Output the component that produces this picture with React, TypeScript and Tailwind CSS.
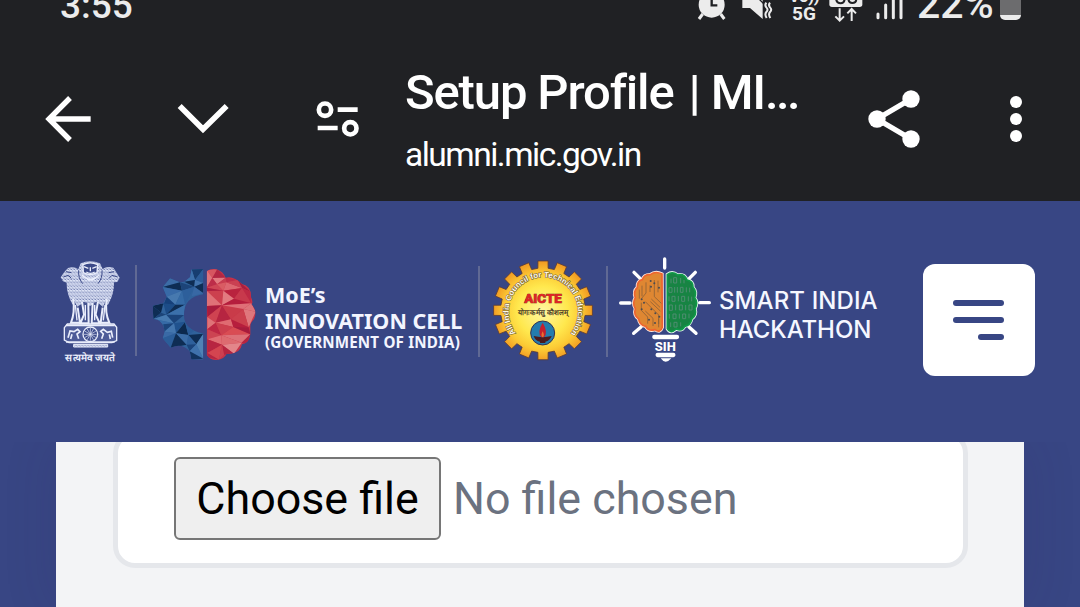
import type { ReactNode } from "react";

const f = (n: number) => n.toFixed(1);

function gearPath(cx: number, cy: number, outer: number, inner: number, teeth: number) {
  const step = (Math.PI * 2) / teeth;
  const pts: string[] = [];
  for (let i = 0; i < teeth; i++) {
    const a = i * step - Math.PI / 2;
    const corners: [number, number][] = [
      [inner, -0.31],
      [outer, -0.26],
      [outer, 0.26],
      [inner, 0.31],
    ];
    for (const [r, k] of corners) {
      pts.push(`${f(cx + r * Math.cos(a + k * step))} ${f(cy + r * Math.sin(a + k * step))}`);
    }
  }
  return `M${pts.join("L")}Z`;
}

function StatusBar() {
  return (
    <div className="flex h-[24px] w-full items-start overflow-hidden text-[#ececec]">
      <span className="-mt-[16px] ml-[60px] w-[76px] text-[37px] leading-[44px] font-medium whitespace-nowrap">3:55</span>
      <svg className="ml-[561px] h-[24px] w-[80px] shrink-0" viewBox="51 0 240 72">
        <circle cx="95" cy="14" r="39" fill="#ececec" />
        <path d="M68 42l-11 15M122 42l11 15" stroke="#ececec" strokeWidth="9" />
        <path d="M95 -4V16H112" fill="none" stroke="#202124" strokeWidth="7" />
        <path d="M187 -2V24H210L248 57V-2Z" fill="#ececec" />
        <path d="M236 -4L252 12" stroke="#202124" strokeWidth="4" />
        <path d="M259 8q-6 7 0 14q7 7 0 14q-6 7 1 18M270 8q-6 7 0 14q7 7 0 14q-6 7 1 18" fill="none" stroke="#ececec" strokeWidth="6" />
      </svg>
      <div className="ml-[13px] flex w-[28px] flex-col items-center font-bold">
        <span className="-mt-[12px] text-[17px] leading-[17px] tracking-tight whitespace-nowrap">Vo))</span>
        <span className="text-[19px] leading-[17px]">5G</span>
      </div>
      <svg className="ml-[11px] h-[24px] w-[34px] shrink-0" viewBox="449 0 102 72">
        <rect x="450" y="-40" width="99" height="61" rx="8" fill="#ececec" />
        <path d="M470 -4q2 14 14 14q10 0 12-12M507 -6q0 15 12 15q12 0 12-12h-9" fill="none" stroke="#202124" strokeWidth="6" />
        <path d="M481 25V61M468 49L481 62L494 49M517 63V28M504 40L517 27L530 40" fill="none" stroke="#ececec" strokeWidth="6" />
      </svg>
      <svg className="ml-[11px] h-[24px] w-[32px] shrink-0" viewBox="582 0 96 72">
        <path d="M594 42V53M617 15V53M640 -4V53M663 -9V53" stroke="#ececec" strokeWidth="9" strokeLinecap="round" />
      </svg>
      <span className="-mt-[18px] ml-[11px] w-[83px] text-[41px] leading-[44px] font-medium whitespace-nowrap">22%</span>
      <div className="flex h-[20px] w-[21px] flex-col overflow-hidden rounded-b-[5px] bg-[#ececec]">
        <div className="h-[15px] bg-[#6c6c6e]" />
      </div>
    </div>
  );
}

function BrowserBar() {
  return (
    <div className="flex h-[177px] items-start text-white">
      <svg className="mt-[70px] ml-[44px] h-[50px] w-[48px] shrink-0" viewBox="132 282 144 150">
        <path d="M272 357H150M210 294L147 357L210 420" fill="none" stroke="white" strokeWidth="16" />
      </svg>
      <svg className="mt-[75px] ml-[84px] h-[40px] w-[54px] shrink-0" viewBox="528 297 162 120">
        <path d="M539 318L609 388L680 318" fill="none" stroke="white" strokeWidth="17" />
      </svg>
      <svg className="mt-[75px] ml-[85px] h-[40px] w-[46px] shrink-0" viewBox="946 297 138 120">
        <g fill="none" stroke="white" strokeWidth="14">
          <circle cx="976" cy="329" r="18.5" />
          <circle cx="1052" cy="385" r="18.5" />
          <path d="M1014 329H1074M954 384H1014" />
        </g>
      </svg>
      <div className="mt-[39px] ml-[44px] flex w-[401px] flex-col whitespace-nowrap">
        <span className="text-[49px] leading-[60px] font-medium tracking-[-1.15px]">
          Setup Profile <span className="ml-[4px]">| MI</span>
          <span className="tracking-[-2.6px]">...</span>
        </span>
        <span className="mt-[11px] text-[33.5px] leading-[42px] font-[450] tracking-[-1.5px]">alumni.mic.gov.in</span>
      </div>
      <svg className="mt-[64px] ml-[61px] h-[62px] w-[56px] shrink-0" viewBox="561 264 168 186">
        <path d="M693 297L591 357L693 417" fill="none" stroke="white" strokeWidth="16" />
        <g fill="white">
          <circle cx="693" cy="297" r="26" />
          <circle cx="591" cy="357" r="26" />
          <circle cx="693" cy="417" r="26" />
        </g>
      </svg>
      <div className="mt-[72px] ml-[87px] flex flex-col gap-[5px]">
        <div className="size-[12px] rounded-full bg-white" />
        <div className="size-[12px] rounded-full bg-white" />
        <div className="size-[12px] rounded-full bg-white" />
      </div>
    </div>
  );
}

function LionCapital() {
  const c = "#e9edfb";
  return (
    <svg className="mt-[59px] ml-[59px] h-[106px] w-[62px] shrink-0" viewBox="57 45 186 318">
      <defs>
        <pattern id="fur" width="9" height="10" patternUnits="userSpaceOnUse">
          <rect width="9" height="10" fill="#dde3f6" />
          <path d="M1 1l3 4 3-4M-2 6l2 3M6 9l3-3" stroke="#4a5894" strokeWidth="1.8" fill="none" />
        </pattern>
      </defs>
      <path d="M122 55Q150 42 180 55L188 72Q200 62 220 68L230 83L239 98L232 111L222 112Q223 145 205 178L189 186L171 171L150 183L132 171L112 186L97 178Q79 145 80 113L69 109L62 97L73 81L84 69Q102 63 115 73Z" fill="url(#fur)" />
      <path d="M129 59Q151 48 173 59L171 83Q151 94 130 83Z" fill="#3b4988" stroke={c} strokeWidth="4" />
      <path d="M132 65L145 70M170 65L157 70M151 67V79M139 81Q151 89 164 81M126 90Q151 116 178 89M137 99Q151 112 167 99" fill="none" stroke={c} strokeWidth="4" />
      <path d="M116 76Q114 100 128 116M186 76Q188 100 174 116" fill="none" stroke="#3b4988" strokeWidth="3" />
      <path d="M70 96L85 91L94 100M233 96L216 91L207 100M78 80L94 83M222 80L206 83" fill="none" stroke="#3b4988" strokeWidth="3" />
      <path d="M100 161Q105 204 93 233H120L113 188M200 161Q194 204 208 233H182L188 188M126 170L132 209L121 235H146L145 174M174 170L167 209L179 235H155L158 174" fill="#45538f" stroke={c} strokeWidth="6" />
      <path d="M106 180L111 226M195 180L190 226M136 180V226M164 180V226" stroke={c} strokeWidth="4" />
      <path d="M82 237H222L230 247V287L216 293H87L73 285V248Z" fill="#4d5b98" stroke={c} strokeWidth="4" />
      <path d="M78 241H224M78 291H224" stroke={c} strokeWidth="5" />
      <circle cx="151" cy="268" r="22" fill="#3d4c8b" stroke={c} strokeWidth="4" />
      {Array.from({ length: 12 }, (_, i) => {
        const a = (i * Math.PI) / 6;
        return <line key={i} x1="151" y1="268" x2={151 + 19 * Math.cos(a)} y2={268 + 19 * Math.sin(a)} stroke={c} strokeWidth="2" />;
      })}
      <path d="M84 278L90 258L102 260L113 253L120 260L111 267L116 281M96 268L92 282M218 278L214 259L202 262L190 253L182 259L190 267L185 281M208 268L211 282" fill="none" stroke={c} strokeWidth="5" />
      <path d="M101 298H203V306H101Z" fill="url(#fur)" stroke={c} strokeWidth="3" />
      <text x="151" y="349" textAnchor="middle" textLength="150" lengthAdjust="spacingAndGlyphs" fontSize="29" fontWeight="700" fill={c}>सत्यमेव जयते</text>
    </svg>
  );
}

const gearFacets: [string, string][] = [
  ["155,43 190,42 165,75", "#173e70"], ["190,42 190,84 165,75", "#2c5c98"], ["155,43 165,75 133,80", "#3d70aa"],
  ["133,80 165,75 163,95", "#0e2d54"], ["165,75 190,84 163,95", "#4274ae"], ["163,95 190,84 190,115", "#0e2d54"], ["163,95 190,115 155,124", "#3868a4"],
  ["90,70 120,82 68,96", "#3c6ca6"], ["120,82 126,107 68,96", "#0e2d54"], ["120,82 163,95 126,107", "#1c4479"], ["68,96 126,107 80,125", "#386aa7"],
  ["80,125 126,107 106,149", "#4779af"], ["126,107 163,95 135,149", "#2d5f9b"], ["126,107 135,149 106,149", "#356aa5"], ["80,125 106,149 70,150", "#16407a"],
  ["70,145 106,149 79,179", "#1c4c87"], ["38,152 70,145 63,173", "#0b284c"], ["38,152 63,173 40,192", "#0e2d54"], ["63,173 79,179 40,192", "#1c4478"],
  ["106,149 135,149 79,179", "#0e2d54"], ["135,149 132,180 79,179", "#3b70ab"], ["40,192 79,179 102,205", "#477ab0"], ["79,179 132,180 102,205", "#1b447b"],
  ["40,192 102,205 70,208", "#366aa6"], ["102,205 135,200 108,235", "#20528e"], ["70,208 102,205 73,230", "#1b447b"], ["73,230 102,205 108,235", "#4476ae"],
  ["73,230 108,235 68,250", "#3a6aa6"], ["68,250 108,235 92,278", "#2b5d99"], ["108,235 92,278 140,269", "#0e2d54"], ["108,235 135,202 145,240", "#0c294e"],
  ["108,235 145,240 140,269", "#3b6ca6"], ["135,200 162,229 145,240", "#2b5c98"], ["145,240 190,236 169,268", "#0e2d54"], ["140,269 145,240 169,268", "#2e609c"],
  ["140,269 169,268 149,289", "#1b447b"], ["149,289 169,268 190,311", "#3f72ac"], ["149,289 190,311 154,314", "#12345f"], ["169,268 190,236 190,311", "#5082b5"],
];

const brainFacets: [string, string][] = [
  ["200,45 232,43 217,69", "#d65660"], ["200,45 217,69 200,98", "#df737b"], ["232,43 257,68 217,69", "#b22743"], ["217,69 257,68 231,88", "#e27a80"],
  ["200,98 217,69 231,88", "#bd2d49"], ["200,98 231,88 250,107", "#cf4656"], ["200,98 250,107 201,108", "#ac1f3f"], ["257,68 293,75 259,82", "#bd2d49"],
  ["231,88 257,68 259,82", "#c73d50"], ["231,88 259,82 250,107", "#d95c63"], ["259,82 306,99 250,107", "#dd6770"], ["293,75 331,110 306,99", "#a91e3e"],
  ["259,82 293,75 306,99", "#ca4052"], ["201,108 250,107 246,151", "#cc404e"], ["201,108 246,151 201,153", "#df7177"], ["250,107 306,99 282,131", "#b9233e"],
  ["250,107 282,131 246,151", "#e27b80"], ["282,131 306,99 334,145", "#c8394c"], ["306,99 331,110 334,145", "#bd2944"], ["246,151 282,131 334,145", "#b51e3d"],
  ["201,153 246,151 202,186", "#a91c3d"], ["202,186 246,151 227,203", "#cf4351"], ["246,151 273,193 227,203", "#b62541"], ["246,151 310,162 273,193", "#c93b49"],
  ["246,151 334,145 310,162", "#df6f77"], ["334,145 347,170 310,162", "#dd747a"], ["310,162 347,170 326,217", "#df777c"], ["310,162 326,217 273,193", "#cb404d"],
  ["202,186 227,203 202,223", "#df7378"], ["202,223 227,203 244,241", "#bd2844"], ["227,203 273,193 280,216", "#df6b71"], ["227,203 280,216 244,241", "#cc404e"],
  ["273,193 326,217 280,216", "#b71e3d"], ["202,223 244,241 202,253", "#cc4452"], ["202,253 244,241 246,269", "#df6d73"], ["244,241 280,216 331,238", "#d94c53"],
  ["280,216 326,217 331,238", "#a71b3c"], ["244,241 331,238 305,263", "#dd7178"], ["244,241 305,263 246,269", "#dd6b70"], ["331,238 323,270 305,263", "#b52440"],
  ["202,253 246,269 202,294", "#b72541"], ["202,294 246,269 237,314", "#d44550"], ["246,269 305,263 282,296", "#e3868a"], ["246,269 282,296 252,299", "#b52440"],
  ["246,269 252,299 237,314", "#cc4051"], ["202,294 237,314 202,307", "#b62541"],
];

function GearBrain() {
  return (
    <svg className="mt-[67px] ml-[14px] h-[94px] w-[106px] shrink-0" viewBox="33 39 318 282">
      <defs>
        <clipPath id="gearHalf">
          <path d="M190 42L155 43L150 67L133 80L120 82L90 70L68 96L80 125L70 145L38 152L40 192Q68 192 74 230L68 250L92 278Q127 262 149 289L154 314H190V235Q132 226 132 180Q132 126 190 118Z" />
        </clipPath>
        <clipPath id="brainHalf">
          <path d="M200 49Q215 39 233 44Q249 49 257 68Q281 62 306 87Q334 93 333 126Q341 145 334 147Q354 170 342 193Q330 205 331 215V238Q328 265 306 268Q301 299 260 296Q253 312 231 315Q210 316 200 299Z" />
        </clipPath>
      </defs>
      <g clipPath="url(#gearHalf)">
        <rect x="33" y="39" width="160" height="280" fill="#30629b" />
        {gearFacets.map(([p, c]) => <polygon key={p} points={p} fill={c} />)}
      </g>
      <g clipPath="url(#brainHalf)">
        <rect x="198" y="39" width="155" height="280" fill="#c73348" />
        {brainFacets.map(([p, c]) => <polygon key={p} points={p} fill={c} />)}
      </g>
    </svg>
  );
}

function AicteSeal() {
  return (
    <svg className="mt-[58px] ml-[12px] h-[103px] w-[102px] shrink-0" viewBox="20 27 306 309">
      <defs>
        <radialGradient id="sealGold" cx="172" cy="184" r="150" gradientUnits="userSpaceOnUse">
          <stop offset="0" stopColor="#fff6a0" />
          <stop offset="0.5" stopColor="#ffe84e" />
          <stop offset="0.76" stopColor="#fccb35" />
          <stop offset="1" stopColor="#f19a22" />
        </radialGradient>
        <path id="sealArc" d="M93 251A104 104 0 1 1 255 251" />
      </defs>
      <path d={gearPath(173, 181, 149, 127, 16)} fill="url(#sealGold)" stroke="#5b3b35" strokeWidth="2.5" />
      <text fontFamily="Liberation Sans" fontSize="24" fontWeight="700" fill="#fffbe8" stroke="#6b5430" strokeWidth="3" paintOrder="stroke">
        <textPath href="#sealArc" startOffset="2" textLength="464">All India Council for Technical Education</textPath>
      </text>
      <text x="173" y="160" textAnchor="middle" textLength="113" lengthAdjust="spacingAndGlyphs" fontSize="40" fontWeight="900" fill="#df2425" stroke="#74201a" strokeWidth="2" paintOrder="stroke">AICTE</text>
      <text x="173" y="196" textAnchor="middle" textLength="150" lengthAdjust="spacingAndGlyphs" fontSize="22" fontWeight="700" fill="#4b3c28">योगः कर्मसु कौशलम्</text>
      <circle cx="172" cy="249" r="36" fill="#247cad" stroke="#343252" strokeWidth="3" />
      <path d="M145 258Q172 265 199 258Q194 272 180 275V279H164V275Q149 272 145 258Z" fill="#4b1a1c" />
      <path d="M172 218Q190 247 176 262H168Q154 247 172 218Z" fill="#c5202d" />
      <path d="M172 244Q178 255 174 261H170Q166 255 172 244Z" fill="#e8702f" />
    </svg>
  );
}

function HackathonBulb() {
  const left = "M186 72Q166 62 151 74Q132 73 127 89Q111 93 112 112Q99 124 106 143Q96 161 106 176Q100 195 116 207Q118 225 137 229Q146 245 165 239Q181 250 187 232Z";
  const right = "M202 74Q217 62 233 75Q253 70 261 90Q280 93 279 112Q291 124 284 143Q295 157 285 176Q291 195 275 207Q272 225 254 229Q246 245 229 237Q211 253 202 236Z";
  return (
    <svg className="mt-[55px] ml-[10px] h-[110px] w-[94px] shrink-0" viewBox="54 18 282 330">
      <path d="M194 27V54M102 67L121 86M62 159H90M101 250L123 231M286 67L268 85M299 158H328M288 250L267 231" stroke="white" strokeWidth="10" strokeLinecap="round" />
      <path d={left} fill="#df8732" stroke="#ffe8dc" strokeWidth="10" />
      <path d={left} fill="#df8732" stroke="#ee642f" strokeWidth="5" />
      <path d={right} fill="#178443" stroke="#e5f7ed" strokeWidth="10" />
      <path d={right} fill="#178443" stroke="#0f9948" strokeWidth="5" />
      <path d="M126 107V139M138 97V129L125 145M150 106V126M163 90V140L184 160M174 92V127M124 158V181L143 201V221M136 155L176 195V222M151 155L181 183M136 183L159 205V228M118 119V146M154 147L180 172M176 206V232" fill="none" stroke="#8f6236" strokeWidth="2.5" />
      <g fill="#4a4b50">
        {[[152, 93], [163, 100], [153, 110], [177, 113], [125, 148], [132, 158], [125, 178], [154, 178], [166, 190], [178, 200], [147, 209], [165, 219]].map(([x, y]) => <circle key={`${x}-${y}`} cx={x} cy={y} r="3" />)}
      </g>
      <g stroke="#4f8c70" strokeWidth="3" fill="none">
        <path d="M213 86V100M221 83H230V99H221ZM242 84V100M252 90V100" />
        <path d="M207 113H216V127H207ZM224 111V128M232 111V128M241 112H249V127H241ZM259 112V127M269 113V127" />
        <path d="M207 139V154M216 139H225V154H216ZM235 138V154M245 139H254V154H245ZM265 139V154M275 140V154" />
        <path d="M208 165H217V181H208ZM227 164V181M238 165H247V180H238ZM257 165V181M267 165H276V180H267Z" />
        <path d="M208 192V206M219 192H228V206H219ZM238 191V206M248 192H257V206H248ZM267 191V205M212 217V231M222 217H231V231H222ZM242 217V229" />
      </g>
      <path d="M163 261H231M173 315H220" stroke="white" strokeWidth="13" strokeLinecap="round" />
      <path d="M182 325H214Q206 335 197 335Q189 335 182 325Z" fill="white" />
      <text x="196" y="302" textAnchor="middle" textLength="63" lengthAdjust="spacingAndGlyphs" fontSize="41" fontWeight="800" fill="white">SIH</text>
    </svg>
  );
}

function Divider({ className }: { className: string }) {
  return <div className={`h-[91px] w-[2px] shrink-0 bg-[#606994] ${className}`} />;
}

function SiteHeader() {
  return (
    <header className="flex h-[241px] w-full shrink-0 items-start bg-[#384684]">
      <LionCapital />
      <Divider className="mt-[64px] ml-[14px]" />
      <GearBrain />
      <div className="mt-[81px] ml-[8px] flex w-[204px] flex-col font-['Noto_Sans','Open_Sans',sans-serif] font-bold whitespace-nowrap text-[#f3f5ff]">
        <span className="text-[21.5px] leading-[26px]">MoE’s</span>
        <span className="text-[21.5px] leading-[26px]">INNOVATION CELL</span>
        <span className="text-[15.2px] leading-[17px] tracking-[0.15px]">(GOVERNMENT OF INDIA)</span>
      </div>
      <Divider className="mt-[65px] ml-[9px]" />
      <AicteSeal />
      <Divider className="mt-[65px] ml-[12px]" />
      <HackathonBulb />
      <div className="mt-[85px] ml-[7px] flex w-[161px] flex-col font-['Inter',sans-serif] text-[24px] leading-[29px] font-medium whitespace-nowrap text-[#f5f7ff]">
        <span className="tracking-[0.1px]">SMART INDIA</span>
        <span className="tracking-[-0.1px]">HACKATHON</span>
      </div>
      <button className="mt-[63px] ml-[43px] flex size-[112px] shrink-0 flex-col items-end gap-[11px] rounded-[12px] bg-white pt-[36px] pr-[31px]" aria-label="Menu">
        <span className="h-[6px] w-[51px] rounded-full bg-[#384684]" />
        <span className="h-[6px] w-[51px] rounded-full bg-[#384684]" />
        <span className="h-[6px] w-[26px] rounded-full bg-[#384684]" />
      </button>
    </header>
  );
}

function Panel({ children }: { children: ReactNode }) {
  return (
    <main className="flex grow justify-center overflow-hidden bg-[#384684]">
      <div className="w-[968px] bg-[#f3f4f6] pl-[57px] shadow-[0_0_50px_rgba(50,40,90,0.14)]">{children}</div>
    </main>
  );
}

export default function App() {
  return (
    <div className="flex h-[607px] w-[1080px] flex-col overflow-hidden font-['Roboto',sans-serif]">
      <div className="h-[201px] w-full shrink-0 bg-[#202124]">
        <StatusBar />
        <BrowserBar />
      </div>
      <SiteHeader />
      <Panel>
        <div className="-mt-[11px] flex h-[137px] w-[855px] items-start rounded-[22px] border-[5px] border-[#e5e7eb] bg-white pt-[21px] pl-[56px]">
          <button className="h-[83px] w-[267px] rounded-[6px] border-2 border-[#767676] bg-[#efefef] text-[44.8px] leading-[79px] whitespace-nowrap text-black">Choose file</button>
          <span className="ml-[12px] text-[44.8px] leading-[83px] whitespace-nowrap text-[#6b7280]">No file chosen</span>
        </div>
      </Panel>
    </div>
  );
}
